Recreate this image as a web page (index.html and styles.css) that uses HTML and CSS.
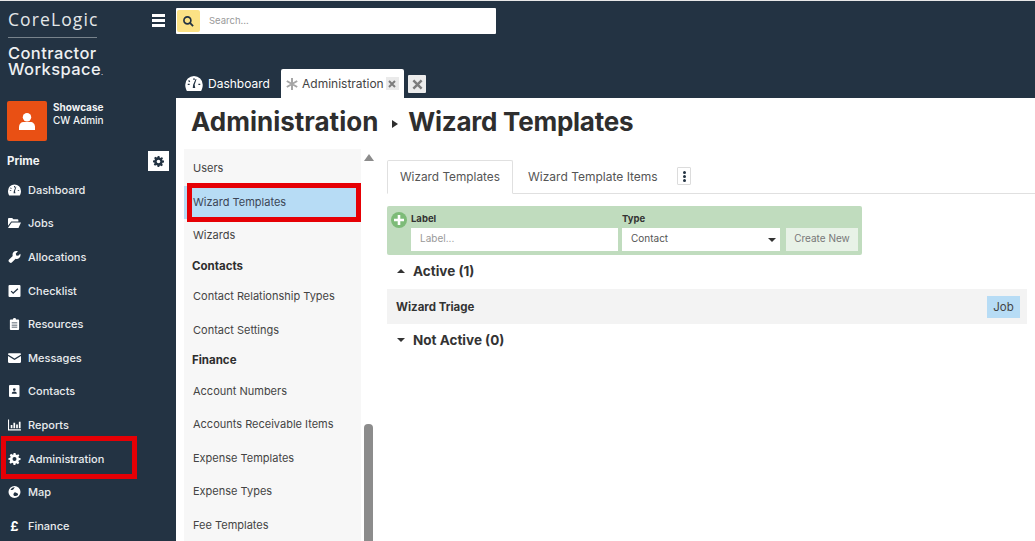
FILE: index.html
```html
<!DOCTYPE html>
<html lang="en">
<head>
<meta charset="utf-8">
<title>Wizard Templates</title>
<link rel="stylesheet" href="styles.css">
</head>
<body>
<div class="app">
  <aside class="sidebar">
    <div class="brand">
      <div class="brand-top"><span class="corelogic">CoreLogic</span><button class="burger" aria-label="Menu"><i></i><i></i><i></i></button></div>
      <div class="brand-rule"></div>
      <div class="brand-name">Contractor<br>Workspace<small>.</small></div>
    </div>
    <div class="user">
      <div class="avatar"><svg width="16" height="17" viewBox="0 0 16 17"><circle cx="8" cy="4.3" r="4.2" fill="#fff"/><path d="M0 17v-3c0-3 2-5 4.6-5h6.8C14 9 16 11 16 14v3z" fill="#fff"/></svg></div>
      <div class="user-text"><b>Showcase</b><span>CW Admin</span></div>
    </div>
    <div class="prime"><b>Prime</b><button class="gear-btn" aria-label="Settings"><svg width="11" height="11" viewBox="0 0 12 12"><path class="g" fill-rule="evenodd" d="M5 0h2l.3 1.6 1.1.5L9.800 1.200l1.100 1.400-1 1.200.5 1.200L12 5v2l-1.600.3-.5 1.100.9 1.400-1.400 1.400-1.400-.9-1.100.5L7 12H5l-.3-1.700-1.100-.5-1.400.9-1.400-1.400.9-1.400-.5-1.100L0 7V5l1.700-.3.400-1.100-.9-1.400 1.400-1.400 1.400.9 1.100-.5zM6 4a2 2 0 1 0 0 4 2 2 0 0 0 0-4z"/></svg></button></div>
    <nav class="nav">
      <a class="nav-item"><svg viewBox="0 0 14 12"><path fill-rule="evenodd" d="M7 0a7 7 0 0 1 7 7c0 2-.5 3.500-1.300 5H1.300C.5 10.500 0 9 0 7a7 7 0 0 1 7-7zM6.300 7l-.3 2.500h2L7.500 7 9 2.500 8.300 2.300zM2 6.200v1h1.500v-1zm8.500 0v1H12v-1zM3 3.200l-.7.7 1 1 .7-.7zM6.500 1.700v1.500h1V1.700z"/></svg>Dashboard</a>
      <a class="nav-item"><svg viewBox="0 0 14 11"><path d="M0 1.200C0 .5.500 0 1.200 0h3.300l1.300 1.500h4.400c.6 0 1 .4 1 1V4H3.500L0 8.500z"/><path d="M3.900 5H14l-2.700 6H0z"/></svg>Jobs</a>
      <a class="nav-item"><svg viewBox="0 0 12 12"><path d="M11.800 2.700 9.700 4.800 7.700 4.400 7.300 2.400 9.400.3C7.900-.3 6.200 0 5.100 1.100 4 2.200 3.800 3.600 4.200 4.900L.4 8.700c-.5.500-.5 1.400 0 2l.9.900c.6.500 1.500.5 2 0l3.800-3.800c1.300.4 2.700.1 3.800-1 1.100-1.100 1.400-2.700.9-4.100z"/></svg>Allocations</a>
      <a class="nav-item"><svg viewBox="0 0 11 11"><path fill-rule="evenodd" d="M1 0h9a1 1 0 0 1 1 1v9a1 1 0 0 1-1 1H1a1 1 0 0 1-1-1V1a1 1 0 0 1 1-1zm1.800 5.200-.8.800 2.300 2.300L9 3.800 8.200 3 4.300 6.700z"/></svg>Checklist</a>
      <a class="nav-item"><svg viewBox="0 0 10 13"><path fill-rule="evenodd" d="M3.300 1.500a1.700 1.500 0 0 1 3.400 0H9a1 1 0 0 1 1 1V12a1 1 0 0 1-1 1H1a1 1 0 0 1-1-1V2.500a1 1 0 0 1 1-1zM2 5v.8h6V5zm0 2.200V8h6v-.8zm0 2.200v.8h6v-.8z"/></svg>Resources</a>
      <a class="nav-item"><svg viewBox="0 0 12 9"><path d="M1 0h10c.6 0 1 .4 1 1v.3L6 5 0 1.300V1c0-.6.4-1 1-1z"/><path d="M0 2.600 6 6.300l6-3.700V8c0 .6-.4 1-1 1H1c-.6 0-1-.4-1-1z"/></svg>Messages</a>
      <a class="nav-item"><svg viewBox="0 0 11 12"><path fill-rule="evenodd" d="M1 0h8.500a1 1 0 0 1 1 1v10a1 1 0 0 1-1 1H1a1 1 0 0 1-1-1V1a1 1 0 0 1 1-1zm4.300 3.200a1.400 1.400 0 1 0 0 2.800 1.400 1.400 0 0 0 0-2.800zM2.800 8.800h5c0-1.300-1-2.200-2.500-2.200S2.800 7.500 2.800 8.800z"/></svg>Contacts</a>
      <a class="nav-item"><svg viewBox="0 0 12 10"><path d="M0 0h1v9h11v1H0z"/><path d="M2.500 5h1.600v3H2.500zM5 3h1.600v5H5zM7.500 4.500h1.600V8H7.500zM10 2h1.600v6H10z"/></svg>Reports</a>
      <a class="nav-item nav-marked"><svg viewBox="0 0 12 12"><path fill-rule="evenodd" d="M5 0h2l.3 1.600 1.100.5L9.800 1.200l1.100 1.400-1 1.200.5 1.200L12 5v2l-1.600.3-.5 1.100.9 1.400-1.400 1.400-1.400-.9-1.100.5L7 12H5l-.3-1.700-1.100-.5-1.400.9-1.400-1.400.9-1.400-.5-1.100L0 7V5l1.700-.3.400-1.100-.9-1.400 1.400-1.400 1.400.9 1.100-.5zM6 4a2 2 0 1 0 0 4 2 2 0 0 0 0-4z"/></svg>Administration</a>
      <a class="nav-item"><svg viewBox="0 0 12 12"><path fill-rule="evenodd" d="M6 0a6 6 0 1 1 0 12A6 6 0 0 1 6 0zM2 4c1 .3 2 0 3-.8.800-.7.800-1.500 1.500-1.900C4.500 1 2.700 2.200 2 4zm4 2.500c-1 .8-1.500 2-.6 3.200 1 .8 3 .3 4-.7.500-1.200-.3-1.700-1.200-2-.8-.3-1.500-.9-2.200-.5z"/></svg>Map</a>
      <a class="nav-item"><span class="pound">£</span>Finance</a>
    </nav>
  </aside>
  <div class="workspace">
    <header class="topbar">
      <div class="search">
        <span class="search-btn"><svg width="11" height="11" viewBox="0 0 12 12"><circle cx="4.800" cy="4.800" r="3.800" fill="none" stroke="#233343" stroke-width="1.800"/><path d="m7.600 7.600 3.400 3.400" stroke="#233343" stroke-width="2"/></svg></span>
        <span class="search-text">Search...</span>
      </div>
      <div class="tabs">
        <a class="tab-dark"><svg width="18" height="15" viewBox="0 0 14 12"><path fill="#fff" fill-rule="evenodd" d="M7 0a7 7 0 0 1 7 7c0 2-.5 3.500-1.300 5H1.300C.5 10.500 0 9 0 7a7 7 0 0 1 7-7zM6.300 7l-.3 2.500h2L7.500 7 9 2.500 8.300 2.300zM2 6.200v1h1.500v-1zm8.500 0v1H12v-1zM3 3.200l-.7.7 1 1 .7-.7zM6.500 1.700v1.500h1V1.700z"/></svg>Dashboard</a>
        <a class="tab-light"><svg width="12" height="12" viewBox="0 0 12 12"><path d="M6 0v12M.8 3l10.400 6M.8 9l10.400-6" stroke="#a6a6a6" stroke-width="2"/></svg>Administration<span class="tab-x"><svg width="8" height="8" viewBox="0 0 8 8"><path d="m1 1 6 6M7 1 1 7" stroke="#7d7d7d" stroke-width="2"/></svg></span></a>
        <span class="tabs-close"><svg width="11" height="11" viewBox="0 0 8 8"><path d="m1 1 6 6M7 1 1 7" stroke="#7d7d7d" stroke-width="1.800"/></svg></span>
      </div>
    </header>
    <main class="page">
      <h1 class="title"><span class="title-root">Administration</span><svg class="crumb" width="6" height="8" viewBox="0 0 6 8"><path d="M0 0l6 4-6 4z" fill="#2e2e2e"/></svg><span class="title-leaf">Wizard Templates</span></h1>
      <div class="columns">
        <div class="menu-wrap">
          <div class="menu">
            <a class="menu-item">Users</a>
            <a class="menu-item menu-active">Wizard Templates</a>
            <a class="menu-item">Wizards</a>
            <div class="menu-head">Contacts</div>
            <a class="menu-item">Contact Relationship Types</a>
            <a class="menu-item">Contact Settings</a>
            <div class="menu-head">Finance</div>
            <a class="menu-item">Account Numbers</a>
            <a class="menu-item">Accounts Receivable Items</a>
            <a class="menu-item">Expense Templates</a>
            <a class="menu-item">Expense Types</a>
            <a class="menu-item">Fee Templates</a>
          </div>
          <div class="scroll"><span class="scroll-up"></span><span class="scroll-thumb"></span></div>
        </div>
        <section class="detail">
          <div class="subtabs">
            <a class="subtab subtab-on">Wizard Templates</a>
            <a class="subtab">Wizard Template Items</a>
            <span class="kebab"><i></i><i></i><i></i></span>
          </div>
          <form class="create">
            <span class="plus"><svg width="10" height="10" viewBox="0 0 10 10"><path d="M5 0v10M0 5h10" stroke="#fff" stroke-width="2.600"/></svg></span>
            <div class="field field-label"><label>Label</label><div class="input ph">Label...</div></div>
            <div class="field field-type"><label>Type</label><div class="input">Contact<span class="caret"></span></div></div>
            <div class="create-btn">Create New</div>
          </form>
          <h2 class="group"><span class="tri tri-up"></span>Active (1)</h2>
          <div class="row"><b>Wizard Triage</b><span class="job">Job</span></div>
          <h2 class="group"><span class="tri tri-down"></span>Not Active (0)</h2>
        </section>
      </div>
    </main>
  </div>
</div>
</body>
</html>
```
FILE: styles.css
```css
*, *::before, *::after { box-sizing: border-box; }
html, body { margin: 0; height: 100%; overflow: hidden; }
body { font-family: Inter, "Liberation Sans", sans-serif; background: #233343; color: #333; }
a { display: block; }
button { border: 0; padding: 0; background: none; }

.app { display: flex; height: 541px; border-top: 1px solid #e8e8e8; }

.sidebar { width: 176px; flex: none; background: #233343; color: #f2f4f5; padding: 0 7px; }
.brand { height: 99px; padding-top: 9px; }
.brand-top { display: flex; align-items: center; justify-content: space-between; height: 19px; padding-right: 4px; }
.corelogic { font-family: "Open Sans", sans-serif; font-size: 17.500px; letter-spacing: 1.100px; line-height: 19px; margin-left: 1px; color: #e4e7e9; }
.burger { width: 13px; display: flex; flex-direction: column; gap: 2px; margin-top: 2px; }
.burger i { display: block; height: 3px; background: #fff; }
.brand-rule { width: 89px; height: 1px; background: #78838c; margin: 8px 0 7px 1px; }
.brand-name { font-size: 16.500px; font-weight: 500; line-height: 16px; letter-spacing: .4px; margin-left: 1px; color: #eef0f2; }
.brand-name small { font-size: 7px; }

.user { display: flex; gap: 6px; align-items: flex-start; height: 40px; margin-top: 1px; }
.avatar { width: 40px; height: 40px; background: #e95014; border-radius: 2px; display: flex; align-items: center; justify-content: center; }
.user-text { display: flex; flex-direction: column; font-size: 10px; line-height: 13px; }
.user-text b { font-weight: 700; }
.user-text span { font-weight: 500; }

.prime { display: flex; align-items: center; justify-content: space-between; height: 20px; margin-top: 10px; font-size: 11.500px; }
.prime b { font-weight: 700; padding-bottom: 1px; }
.gear-btn { width: 21px; height: 20px; background: #fff; display: flex; align-items: center; justify-content: center; }
.g { fill: #233343; }

.nav { margin-top: 2px; }
.nav-item { position: relative; display: flex; align-items: center; height: 33.600px; font-size: 11px; font-weight: 500; color: #e9ecee; }
.nav-item svg { width: 13px; height: 12px; flex: none; margin: 0 7px 0 1px; fill: #fff; }
.pound { width: 13px; margin: 0 7px 0 1px; text-align: center; color: #fff; font-size: 13px; font-weight: 700; }
.nav-marked::after { content: ""; position: absolute; left: -6px; top: -5.500px; width: 136px; height: 43px; border: 5px solid #e60005; }

.workspace { flex: 1; min-width: 0; display: flex; flex-direction: column; }
.topbar { height: 97px; flex: none; padding-top: 7px; }
.search { width: 320px; height: 26px; background: #fff; border-radius: 1px; padding: 2px 1px; display: flex; align-items: center; }
.search-btn { width: 23px; height: 22px; background: #fce285; border-radius: 2px; display: flex; align-items: center; justify-content: center; }
.search-text { margin: 0 0 1px 9px; font-size: 9.500px; color: #999; }

.tabs { display: flex; align-items: flex-end; margin-top: 35px; height: 29px; }
.tab-dark { display: flex; align-items: center; gap: 5px; width: 105px; height: 29px; padding-left: 9px; color: #fff; font-size: 12px; }
.tab-light { display: flex; align-items: center; height: 29px; width: 123px; padding-left: 5px; background: #fff; border-radius: 2px 2px 0 0; color: #444; font-size: 12px; }
.tab-light svg { flex: none; }
.tab-light > svg { margin-right: 4px; }
.tab-x { width: 13px; height: 13px; margin-left: 2px; background: #eaeaea; display: flex; align-items: center; justify-content: center; flex: none; }
.tabs-close { width: 18px; height: 18px; margin: 0 0 5px 4px; background: #ececec; border-radius: 1px; display: flex; align-items: center; justify-content: center; }

.page { flex: 1; min-height: 0; background: #fff; display: flex; flex-direction: column; }
.title { margin: 0; height: 51px; padding: 0 0 3px 15px; font-size: 26px; line-height: 32px; font-weight: 700; color: #2e2e2e; display: flex; align-items: center; align-self: flex-start; }
.title-leaf { letter-spacing: -.25px; }
.crumb { margin: 3px 10px 0 14px; }
.columns { flex: 1; min-height: 0; display: flex; }

.menu-wrap { width: 203px; flex: none; padding-left: 8px; display: flex; gap: 3px; overflow: hidden; }
.menu { width: 177px; flex: none; background: #f7f7f7; font-size: 11px; color: #444; padding-top: 3px; }
.menu-item { position: relative; height: 33.500px; line-height: 33.500px; padding-left: 9px; white-space: nowrap; }
.menu-active { background: linear-gradient(#b7dcf5, #b7dcf5) 0 0 / 174px 100% no-repeat; color: #3c4656; }
.menu-active::after { content: ""; position: absolute; left: 3px; right: 0; top: -2.500px; bottom: -2.500px; border: 5px solid #e60005; }
.menu-head { height: 27.500px; line-height: 27.500px; padding-left: 8px; font-size: 11.500px; font-weight: 700; color: #2e2e2e; }
.scroll { width: 9px; flex: none; position: relative; }
.scroll-up { display: block; margin-top: 5px; width: 0; height: 0; border-left: 5px solid transparent; border-right: 5px solid transparent; border-bottom: 7px solid #8c8c8c; }
.scroll-thumb { position: absolute; left: 0; top: 275px; width: 9px; height: 200px; background: #8c8c8c; border-radius: 4px 4px 0 0; }

.detail { flex: 1; min-width: 0; padding: 11px 0 0 8px; }
.subtabs { display: flex; align-items: center; height: 34px; border-bottom: 1px solid #e0e0e0; font-size: 12px; color: #555; }
.subtab { height: 34px; line-height: 35px; padding: 0 13px; white-space: nowrap; }
.subtab-on { background: #fff; border: 1px solid #e0e0e0; border-bottom-color: #fff; width: 126px; padding: 0 12px; border-radius: 2px 2px 0 0; font-size: 11.800px; line-height: 33px; }
.subtab + .subtab { padding: 0 14px 0 15px; width: 154px; line-height: 33px; }
.kebab { width: 14px; height: 18px; margin: 0 0 1px 10px; border: 1px solid #dcdcdc; border-radius: 1px; display: flex; flex-direction: column; align-items: center; justify-content: center; gap: 1px; }
.kebab i { width: 3px; height: 3px; background: #233343; border-radius: 50%; }

.create { position: relative; width: 475px; height: 49px; margin-top: 12px; background: #c0dcbe; border-radius: 2px; display: flex; padding: 6px 4px 0 24px; gap: 4px; font-size: 10px; }
.plus { position: absolute; left: 4px; top: 6px; width: 16px; height: 16px; border-radius: 50%; background: #7dbb78; display: flex; align-items: center; justify-content: center; }
.field label { display: block; font-weight: 700; color: #333; font-size: 9.500px; line-height: 13px; height: 16px; }
.field-label { width: 207px; }
.field-type { width: 158px; }
.input { position: relative; height: 23px; line-height: 21px; padding-left: 9px; background: #fff; color: #555; }
.ph { color: #999; }
.caret { position: absolute; right: 4px; top: 10px; width: 0; height: 0; border-left: 4px solid transparent; border-right: 4px solid transparent; border-top: 4px solid #333; }
.create-btn { align-self: flex-end; width: 72px; height: 23px; margin: 0 0 4px 2px; background: #e8f2e7; color: #777; line-height: 21px; text-align: center; }

.group { margin: 0; height: 34px; display: flex; align-items: center; padding: 0 0 2px 10px; font-size: 13.500px; font-weight: 700; color: #333; }
.tri { width: 0; height: 0; margin-right: 8px; border-left: 4px solid transparent; border-right: 4px solid transparent; }
.tri-up { border-bottom: 4px solid #333; }
.tri-down { border-top: 4px solid #333; }
.row { width: 640px; height: 35px; background: #f3f3f3; display: flex; align-items: center; justify-content: space-between; padding: 0 7px 0 9px; font-size: 11.500px; }
.row b { font-weight: 700; color: #333; }
.job { width: 33px; height: 22px; line-height: 22px; text-align: center; background: #b7dcf5; color: #444; font-size: 11.500px; }
```
